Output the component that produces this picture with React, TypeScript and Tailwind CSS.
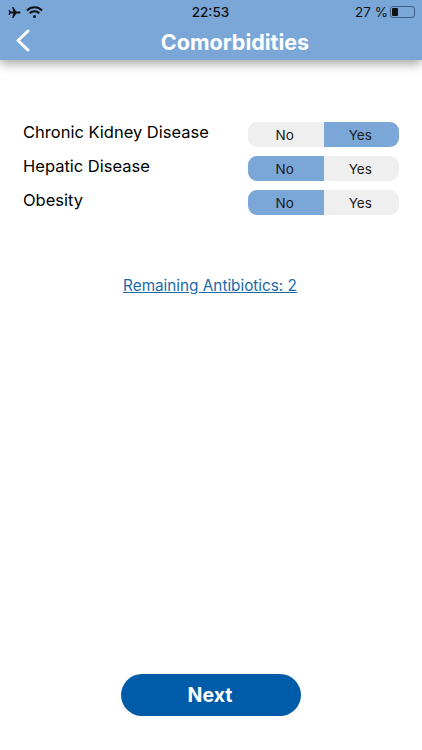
const rows = [
  { label: "Chronic Kidney Disease", value: "Yes" },
  { label: "Hepatic Disease", value: "No" },
  { label: "Obesity", value: "No" },
];

function Toggle({ value }: { value: string }) {
  return (
    <div className="flex w-[151px] h-[25px] rounded-[9px] overflow-hidden bg-[#efefef] text-[13.5px] text-[#1a1a1a]">
      {["No", "Yes"].map((o) => (
        <div
          key={o}
          className={`flex-1 flex items-center justify-center pt-[1px] pr-[2px] ${o === value ? "bg-[#7aa7d8]" : ""}`}
        >
          {o}
        </div>
      ))}
    </div>
  );
}

export default function App() {
  return (
    <div className="w-[422px] h-[750px] bg-white flex flex-col font-['Inter','Liberation_Sans',sans-serif] overflow-hidden">
      <header className="h-[60px] bg-[#7aa7d8] shadow-[0_4px_10px_rgba(0,0,0,0.35)] flex flex-col shrink-0">
        <div className="h-[24px] flex items-center justify-between pl-[8px] pr-[7px] text-[13.5px] text-[#111]">
          <div className="flex items-center gap-[5px] w-[100px]">
            <svg width="13" height="13" viewBox="0 0 24 24" fill="#111">
              <path d="M23 12c0-1.1-1.2-1.9-2.3-1.9h-5.4L9.8 2H7.4l2.7 8.1H5L3 7.6H1l1.3 4.4L1 16.4h2l2-2.5h5.1L7.4 22h2.4l5.5-8.1h5.4c1.1 0 2.3-.8 2.3-1.9z" />
            </svg>
            <svg width="17" height="13" viewBox="0 0 17 13" fill="none" stroke="#111" strokeWidth="2">
              <path d="M1 4.5a10.5 10.5 0 0 1 15 0" />
              <path d="M3.7 7.2a6.6 6.6 0 0 1 9.6 0" />
              <circle cx="8.5" cy="10.6" r="1.5" fill="#111" stroke="none" />
            </svg>
          </div>
          <span className="font-medium pr-[2px]">22:53</span>
          <div className="flex items-center justify-end gap-[2px] w-[100px]">
            <span className="-ml-[2px]">27 %</span>
            <div className="w-[25px] h-[12px] rounded-[3px] border border-[#3d5f8c] p-[1px] flex">
              <div className="w-[6px] bg-[#111] rounded-[1px]" />
            </div>
          </div>
        </div>
        <div className="relative flex-1 flex items-center justify-center pl-[48px]">
          <svg className="absolute left-[15px] top-[4px]" width="16" height="25" viewBox="0 0 16 25" fill="none" stroke="#fff" strokeWidth="3" strokeLinecap="round" strokeLinejoin="round">
            <path d="M13 3L3 12.5L13 22" />
          </svg>
          <h1 className="text-white text-[21.5px] font-bold">Comorbidities</h1>
        </div>
      </header>

      <main className="flex-1 flex flex-col pt-[62px]">
        <div className="flex flex-col gap-[9px] pl-[23px] pr-[23px]">
          {rows.map((r) => (
            <div key={r.label} className="flex justify-between items-center">
              <span className="text-[16.5px] text-black -mt-[5px]">{r.label}</span>
              <Toggle value={r.value} />
            </div>
          ))}
        </div>
        <a className="mt-[60px] pr-[2px] text-center text-[15.3px] text-[#1a6aa8] underline">
          Remaining Antibiotics: 2
        </a>
      </main>

      <div className="flex justify-center pb-[34px]">
        <button className="w-[180px] h-[42px] rounded-full bg-[#005ca8] text-white text-[19.5px] font-bold pt-[2px] pr-[2px]">
          Next
        </button>
      </div>
    </div>
  );
}
